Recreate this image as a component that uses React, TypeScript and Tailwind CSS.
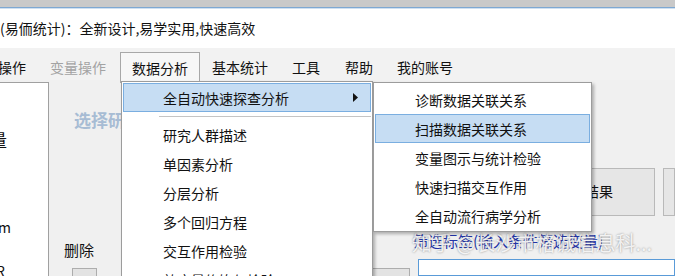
import React from "react";

const mainItems = ["研究人群描述", "单因素分析", "分层分析", "多个回归方程", "交互作用检验", "效应量修饰与检验"];
const subItems = ["诊断数据关联关系", "扫描数据关联关系", "变量图示与统计检验", "快速扫描交互作用", "全自动流行病学分析"];

function MenuRow({ label, active, arrow }: { label: string; active?: boolean; arrow?: boolean }) {
  return (
    <div
      className={`mx-[1px] flex h-[29px] items-center border pl-[39px] pr-[12px] ${
        active ? "border-[#7aaee0] bg-[#c6ddf3]" : "border-transparent"
      }`}
    >
      <span className="flex-1 whitespace-nowrap text-[14px] leading-none text-[#111]">{label}</span>
      {arrow ? (
        <svg width="5" height="9" viewBox="0 0 5 9">
          <polygon points="0,0 5,4.5 0,9" fill="#111" />
        </svg>
      ) : null}
    </div>
  );
}

export default function App() {
  return (
    <div className="relative h-[276px] w-[675px] overflow-hidden bg-[#f0f0f0] font-['Noto_Sans_CJK_SC',sans-serif] text-[#111]">
      {/* window chrome */}
      <div className="h-[7px] bg-[#c9c9c9]" />
      <div className="h-px bg-[#7ea8d2]" />
      <div className="h-px bg-[#cfe0f1]" />
      <div className="flex h-[39px] items-center bg-white pb-[2px]">
        <span className="whitespace-nowrap text-[14px] leading-none">(易侕统计)：全新设计,易学实用,快速高效</span>
      </div>

      {/* menu bar */}
      <div className="flex h-[32px] items-start bg-[#f2f2f2] pt-[4px] text-[14px]">
        <span className="-ml-[2px] h-[31px] leading-[31px]">操作</span>
        <span className="ml-[24px] h-[31px] leading-[31px] text-[#a3a3a3]">变量操作</span>
        <span className="ml-[14px] h-[31px] border border-b-0 border-[#a8a8a8] bg-[#f7f7f7] px-[11px] leading-[30px]">
          数据分析
        </span>
        <span className="ml-[12px] h-[31px] leading-[31px]">基本统计</span>
        <span className="ml-[24px] h-[31px] leading-[31px]">工具</span>
        <span className="ml-[25px] h-[31px] leading-[31px]">帮助</span>
        <span className="ml-[24px] h-[31px] leading-[31px]">我的账号</span>
      </div>

      {/* window body */}
      <div className="flex h-[196px]">
        <div className="mt-[2px] flex w-[49px] flex-col overflow-hidden border-r border-t border-[#a0a0a0] bg-white">
          <span className="-ml-[10px] mt-[47px] text-[17px] leading-[20px]">量</span>
          <span className="-ml-[2px] mt-[67px] text-[14px] leading-[20px]">m</span>
          <span className="-ml-[4px] mt-[24px] text-[14px] leading-[20px]">R</span>
        </div>

        <div className="flex w-[361px] flex-col">
          <span className="ml-[25px] mt-[28px] whitespace-nowrap text-[17px] font-bold leading-[24px] text-[#a7bcd4]">
            选择研究变量
          </span>
          <span className="ml-[15px] mt-[108px] text-[15px] leading-[20px]">删除</span>
          <div className="mt-[8px] flex justify-between">
            <div className="ml-[23px] h-[20px] w-[25px] border border-[#adadad] bg-[#e3e3e3]" />
            <div className="h-[20px] w-[38px] border border-[#adadad] bg-[#e3e3e3]" />
          </div>
        </div>

        <div className="flex flex-1 flex-col">
          <div className="mt-[88px] flex h-[57px] gap-[8px]">
            <div className="ml-[133px] flex w-[112px] items-center justify-center border border-[#b9b9b9] bg-[#e6e6e6] text-[14px]">
              结果
            </div>
            <div className="flex-1 border border-[#b9b9b9] bg-[#e6e6e6]" />
          </div>
          <span className="ml-[3px] mt-[15px] whitespace-nowrap text-[15px] leading-[20px] text-[#2233a8]">
            筛选标签(输入条件筛选变量)
          </span>
          <div className="ml-[8px] mt-[8px] h-[20px] border border-[#5a9bd8] bg-white" />
        </div>
      </div>

      {/* watermark */}
      <div className="absolute left-[412px] top-[231px] whitespace-nowrap text-[20px] leading-[24px] text-white/85 [text-shadow:0_0_2px_rgba(60,60,60,0.6)]">
        知乎 @长沙市格诚信息科...
      </div>

      {/* dropdown: 数据分析 */}
      <div className="absolute left-[121px] top-[81px] h-[220px] w-[252px] border border-[#9c9c9c] bg-white pt-[1px] shadow-[2px_2px_3px_rgba(0,0,0,0.28)]">
        <MenuRow label="全自动快速探查分析" active arrow />
        <div className="flex h-[8px] items-center pl-[37px] pr-[1px]">
          <div className="h-px flex-1 bg-[#c4c4c4]" />
        </div>
        {mainItems.map((item) => (
          <MenuRow key={item} label={item} />
        ))}
      </div>

      {/* submenu */}
      <div className="absolute left-[373px] top-[82px] w-[219px] border border-[#9c9c9c] bg-white pb-[1px] pt-[2px] shadow-[2px_2px_3px_rgba(0,0,0,0.28)]">
        {subItems.map((item, i) => (
          <MenuRow key={item} label={item} active={i === 1} />
        ))}
      </div>
    </div>
  );
}
